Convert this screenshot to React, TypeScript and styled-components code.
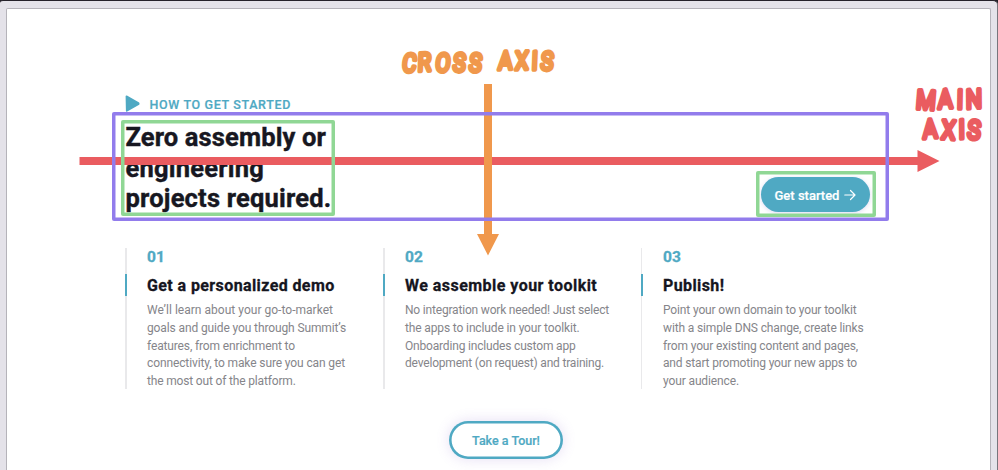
import React from "react";
import styled, { createGlobalStyle } from "styled-components";

const teal = "#4fa9c3";
const violet = "#927cec";
const green = "#90d795";
const coral = "#ea5c60";
const orange = "#f0984c";

const GlobalStyle = createGlobalStyle`
  *, *::before, *::after { box-sizing: border-box; }
  html, body { margin: 0; height: 100%; overflow: hidden; background: #25212a; }
  body { font-family: Roboto, "Liberation Sans", sans-serif; }
  #root { height: 100%; }
`;

const WindowFrame = styled.div`
  position: relative;
  height: 470px;
  width: 998px;
  border-top: 1px solid #25212a;
  border-right: 1px solid #77757c;
  padding: 7px 6px 0 6px;
  background: #e4e2e9;
  border-radius: 3px 5px 0 0;
`;

const Page = styled.main`
  height: 462px;
  border: 1px solid #b5b3ba;
  border-bottom: 0;
  border-radius: 2px 2px 0 0;
  background: #fff;
  padding: 86px 101px 0 106px;
`;

const Eyebrow = styled.div`
  display: flex;
  align-items: center;
  height: 17px;
  padding-left: 12px;
  color: ${teal};
`;

const PlayMark = styled.svg`
  display: block;
  width: 15px;
  height: 17px;
  margin-top: -1px;
`;

const EyebrowText = styled.span`
  margin: 2px 0 0 9.5px;
  font-size: 12.5px;
  font-weight: 500;
  line-height: 17px;
  letter-spacing: 0.65px;
  -webkit-text-stroke: 0.2px ${teal};
`;

/* The outline is drawn above both the content and the axis arrows. */
const Outlined = styled.div<{ $color: string }>`
  position: relative;
  &::after {
    content: "";
    position: absolute;
    inset: 0;
    z-index: 2;
    border-radius: 2px;
    box-shadow: inset 0 0 0 3.5px ${(p) => p.$color};
    pointer-events: none;
  }
`;

const Hero = styled(Outlined)`
  display: flex;
  justify-content: space-between;
  align-items: flex-start;
  width: 777px;
  height: 108.5px;
  margin: 0 0 0 -1px;
  padding: 8px 13.5px 0 8.5px;
`;

const HeadingFrame = styled(Outlined)`
  width: 214px;
  height: 96px;
  padding: 2px 0 0 5px;
`;

const ButtonFrame = styled(Outlined)`
  width: 120px;
  height: 46px;
  margin-top: 51px;
  padding: 6px 5px 0 5px;
`;

const Heading = styled.h1`
  margin: 0;
  font-size: 25.5px;
  font-weight: 700;
  line-height: 30.5px;
  color: #171721;
  -webkit-text-stroke: 0.4px #171721;
`;

const Line = styled.span<{ $track: number }>`
  display: block;
  white-space: nowrap;
  letter-spacing: ${(p) => p.$track}px;
`;

const StartButton = styled.button`
  display: flex;
  align-items: center;
  gap: 5px;
  width: 109.5px;
  height: 35px;
  padding: 1px 0 0 14px;
  border: 0;
  border-radius: 18px;
  background: ${teal};
  color: #fff;
  font: 500 13px Roboto, sans-serif;
  white-space: nowrap;
  box-shadow: 0 1px 4px rgba(112, 90, 200, 0.22);
  -webkit-text-stroke: 0.2px #fff;
`;

const Steps = styled.section`
  display: grid;
  grid-template-columns: 258px 258px 258px;
  margin: 27.5px 0 0 12px;
`;

const Step = styled.article<{ $rail: number }>`
  display: flex;
  height: 141px;
  border-left: ${(p) => p.$rail}px solid #e9e9eb;
  padding-left: ${(p) => 22 - p.$rail}px;
`;

const StepBody = styled.div`
  position: relative;
`;

const RailAccent = styled.i`
  position: absolute;
  left: -22px;
  top: 26px;
  width: 2px;
  height: 22px;
  background: ${teal};
`;

const StepNumber = styled.div`
  height: 27px;
  color: ${teal};
  font-size: 15.5px;
  font-weight: 700;
  line-height: 18px;
  letter-spacing: 0.1px;
  -webkit-text-stroke: 0.3px ${teal};
`;

const StepTitle = styled.h2`
  margin: 0;
  height: 27px;
  color: #15151e;
  font-size: 16px;
  font-weight: 700;
  line-height: 22px;
  -webkit-text-stroke: 0.3px #15151e;
`;

const Copy = styled.p`
  margin: 0;
  color: #85858a;
  font-size: 12px;
  line-height: 17.75px;
`;

const TourRow = styled.div`
  display: flex;
  padding-left: 336px;
  margin-top: 32px;
`;

const TourButton = styled.button`
  width: 114px;
  height: 38px;
  padding: 1px 0 0;
  border: 0;
  border-radius: 19px;
  background: #fff;
  color: ${teal};
  font: 500 12.5px Roboto, sans-serif;
  box-shadow: inset 0 0 0 2.6px ${teal}, 0 0 14px rgba(130, 90, 200, 0.2);
  -webkit-text-stroke: 0.2px ${teal};
`;

const Annotations = styled.svg`
  position: absolute;
  left: 0;
  top: -1px;
  z-index: 1;
  pointer-events: none;
`;

const Lettering = styled.text`
  font-family: Roboto, sans-serif;
  font-weight: 400;
  stroke-width: 4.2px;
  stroke-linejoin: round;
  stroke-linecap: round;
`;

type TextLine = [string, number];

const heading: TextLine[] = [
  ["Zero assembly or", 0.133],
  ["engineering", 0.212],
  ["projects required.", 0.2],
];

const steps: { no: string; rail: number; title: TextLine; lines: TextLine[] }[] = [
  {
    no: "01",
    rail: 2,
    title: ["Get a personalized demo", 0.4],
    lines: [
      ["We’ll learn about your go-to-market", 0.023],
      ["goals and guide you through Summit’s", -0.12],
      ["features, from enrichment to", -0.133],
      ["connectivity, to make sure you can get", -0.117],
      ["the most out of the platform.", -0.165],
    ],
  },
  {
    no: "02",
    rail: 2,
    title: ["We assemble your toolkit", 0.46],
    lines: [
      ["No integration work needed! Just select", -0.187],
      ["the apps to include in your toolkit.", -0.132],
      ["Onboarding includes custom app", -0.179],
      ["development (on request) and training.", -0.189],
    ],
  },
  {
    no: "03",
    rail: 1,
    title: ["Publish!", 0.4],
    lines: [
      ["Point your own domain to your toolkit", -0.137],
      ["with a simple DNS change, create links", -0.138],
      ["from your existing content and pages,", -0.15],
      ["and start promoting your new apps to", -0.161],
      ["your audience.", -0.123],
    ],
  },
];

const lines = (items: TextLine[]) =>
  items.map(([text, track]) => (
    <Line key={text} $track={track}>
      {text}
    </Line>
  ));

export default function App() {
  return (
    <>
      <GlobalStyle />
      <WindowFrame>
        <Page>
          <Eyebrow>
            <PlayMark viewBox="0 0 15 17">
              <path
                d="M1.5 1.3 L13.3 8 Q14 8.7 13.3 9.3 L1.8 15.7Z"
                fill={teal}
                stroke={teal}
                strokeWidth="1.8"
                strokeLinejoin="round"
              />
            </PlayMark>
            <EyebrowText>HOW TO GET STARTED</EyebrowText>
          </Eyebrow>
          <Hero $color={violet}>
            <HeadingFrame $color={green}>
              <Heading>{lines(heading)}</Heading>
            </HeadingFrame>
            <ButtonFrame $color={green}>
              <StartButton>
                Get started
                <svg width="12" height="12" viewBox="0 0 12 12" fill="none" stroke="#fff" strokeWidth="1.2" strokeLinecap="round" strokeLinejoin="round">
                  <path d="M0.8 6H11M6.5 1.5L11 6L6.5 10.5" />
                </svg>
              </StartButton>
            </ButtonFrame>
          </Hero>
          <Steps>
            {steps.map((s) => (
              <Step key={s.no} $rail={s.rail}>
                <StepBody>
                  <RailAccent />
                  <StepNumber>{s.no}</StepNumber>
                  <StepTitle>{lines([s.title])}</StepTitle>
                  <Copy>{lines(s.lines)}</Copy>
                </StepBody>
              </Step>
            ))}
          </Steps>
          <TourRow>
            <TourButton>Take a Tour!</TourButton>
          </TourRow>
        </Page>
        <Annotations width="997" height="470" viewBox="0 0 997 470">
          <path d="M79.5 157H917.5V150L939.5 161L917.5 172V165H79.5Z" fill={coral} />
          <path d="M484 84H492V234H499L488 255.5L477 234H484Z" fill={orange} />
          <g fill={orange} stroke={orange}>
            <Lettering transform="translate(401.5 71.2) skewX(-4) scale(0.84 1)" x="0 19 39.5 60.5 79.5" fontSize="25.5" rotate="4 -2 3 2 3">CROSS</Lettering>
            <Lettering transform="translate(498 69.8) skewX(-4) scale(0.84 1)" x="0 20 40 50" fontSize="25.5" rotate="-2 -2 -2 2">AXIS</Lettering>
          </g>
          <g fill={coral} stroke={coral}>
            <Lettering transform="translate(915.5 108.7) skewX(-2) scale(0.85 1)" x="0 26.5 48.5 59.5" fontSize="26.5" rotate="3 -3 -1 -3">MAIN</Lettering>
            <Lettering transform="translate(923 138.7) skewX(-2) scale(0.85 1)" x="0 21 42 51.5" fontSize="26.5" rotate="-4 3 -3 3">AXIS</Lettering>
          </g>
        </Annotations>
      </WindowFrame>
    </>
  );
}
